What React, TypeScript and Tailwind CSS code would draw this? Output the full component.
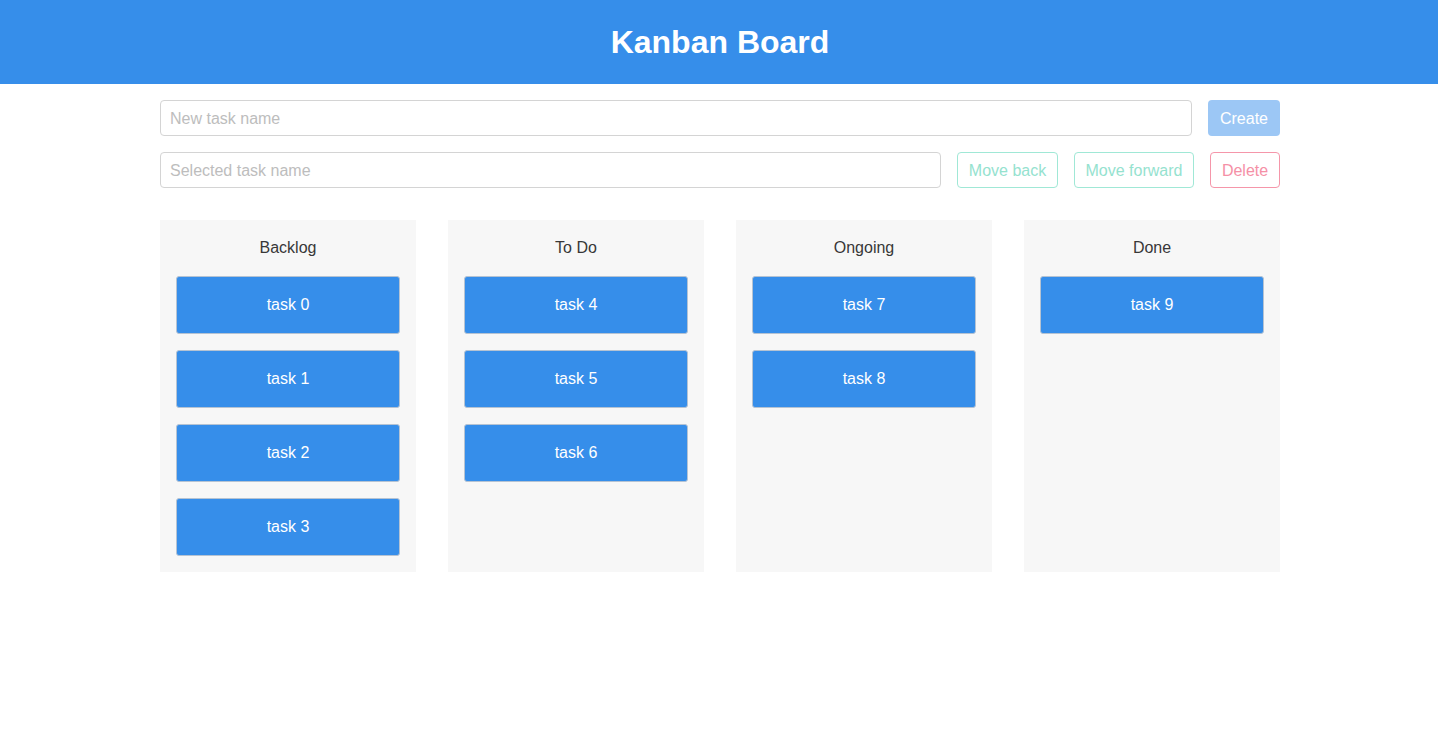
import React from "react";

const columns = [
  { name: "Backlog", tasks: ["task 0", "task 1", "task 2", "task 3"] },
  { name: "To Do", tasks: ["task 4", "task 5", "task 6"] },
  { name: "Ongoing", tasks: ["task 7", "task 8"] },
  { name: "Done", tasks: ["task 9"] },
];

const App = () => {
  return (
    <div className="min-h-screen bg-white font-['Liberation_Sans',Arial,sans-serif]">
      {/* Header */}
      <header className="h-[84px] bg-[#368eea] flex items-center justify-center">
        <h1 className="text-[32px] font-bold text-white pl-[2px]">Kanban Board</h1>
      </header>

      <div className="w-[1120px] ml-[160px] pt-4">
        {/* Create row */}
        <div className="flex gap-4">
          <input
            className="flex-1 h-9 border border-[#d4d4d4] rounded px-[9px] pt-0.5 text-base text-[#333] placeholder:text-[#bdbdbd] outline-none"
            placeholder="New task name"
          />
          <button className="w-[72px] h-9 rounded bg-[#9cc7f5] text-white text-base pt-0.5">
            Create
          </button>
        </div>

        {/* Selected row */}
        <div className="flex gap-4 mt-4">
          <input
            className="flex-1 h-9 border border-[#d4d4d4] rounded px-[9px] pt-0.5 text-base text-[#333] placeholder:text-[#bdbdbd] outline-none"
            placeholder="Selected task name"
          />
          <button className="w-[101px] h-9 rounded border border-[#a0e8d6] text-[#95e2cf] text-base pt-0.5">
            Move back
          </button>
          <button className="w-[120px] h-9 rounded border border-[#a0e8d6] text-[#95e2cf] text-base pt-0.5">
            Move forward
          </button>
          <button className="w-[70px] h-9 rounded border border-[#f596aa] text-[#f590a6] text-base pt-0.5">
            Delete
          </button>
        </div>

        {/* Board */}
        <div className="flex gap-8 mt-8">
          {columns.map((col) => (
            <div key={col.name} className="w-64 bg-[#f7f7f7] p-4">
              <h2 className="text-base leading-6 text-[#383838] text-center mb-4">
                {col.name}
              </h2>
              <div className="flex flex-col gap-4">
                {col.tasks.map((t) => (
                  <div
                    key={t}
                    className="h-[58px] bg-[#368eea] border border-[#b5c3d3] rounded-[3px] flex items-center justify-center text-white text-base"
                  >
                    {t}
                  </div>
                ))}
              </div>
            </div>
          ))}
        </div>
      </div>
    </div>
  );
};

export default App;
